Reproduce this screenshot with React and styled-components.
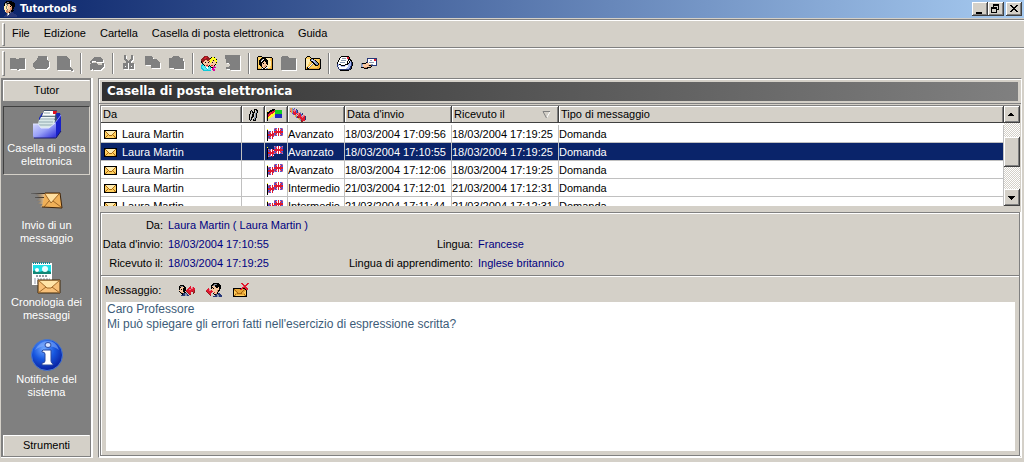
import React from 'react';
import styled, { createGlobalStyle, css } from 'styled-components';

const FACE = '#d4d0c8';
const SHADOW = '#808080';
const DARK = '#404040';
const NAVY = '#0a246a';

const GlobalStyle = createGlobalStyle`
  * { box-sizing: border-box; }
  body {
    margin: 0;
    background: ${FACE};
    font-family: "Liberation Sans", Arial, sans-serif;
    font-size: 11px;
    line-height: 13px;
    color: #000;
  }
  button { font: inherit; color: inherit; margin: 0; }
`;

const raised = css`
  border: 0;
  background: ${FACE};
  box-shadow: inset -1px -1px ${DARK}, inset 1px 1px #fff, inset -2px -2px ${SHADOW};
`;

/* ---------- window frame ---------- */

const Window = styled.div`
  display: flex;
  flex-direction: column;
  min-height: 100vh;
  padding-bottom: 4px;
`;

const TitleBar = styled.header`
  display: flex;
  align-items: center;
  height: 18px;
  margin-bottom: 1px;
  padding: 0 2px;
  gap: 2px;
  background: linear-gradient(to right, ${NAVY}, #a6caf0);
`;

const WindowTitle = styled.h1`
  flex: 1;
  margin: 0;
  font: bold 11px/14px "DejaVu Sans Condensed", Tahoma, sans-serif;
  color: #fff;
`;

const Controls = styled.div`
  display: flex;
`;

const ControlButton = styled.button`
  ${raised}
  display: flex;
  width: 16px;
  height: 14px;
  padding: 0;
  margin-left: ${(p) => (p.$apart ? '2px' : '0')};
`;

const Bar = styled.div`
  display: flex;
  align-items: center;
  height: ${(p) => p.$height};
  padding: 1px 2px 0;
  border-top: 1px solid ${SHADOW};
  box-shadow: inset 0 1px #fff;
`;

const Grip = styled.span`
  width: 3px;
  height: ${(p) => p.$height};
  border: 1px solid;
  border-color: #fff ${SHADOW} ${SHADOW} #fff;
`;

const Menu = styled.nav`
  display: flex;
  padding: 0 7px 2px;
  gap: 14px;
`;

const MenuButton = styled.button`
  padding: 0;
  border: 0;
  background: none;
`;

const ToolButton = styled.button`
  display: flex;
  align-items: center;
  justify-content: center;
  width: 24px;
  height: 24px;
  padding: 0;
  border: 0;
  background: none;
`;

const Separator = styled.span`
  width: 2px;
  height: 21px;
  margin: 0 3px;
  border-left: 1px solid ${SHADOW};
  border-right: 1px solid #fff;
`;

/* ---------- work area ---------- */

const Work = styled.div`
  flex: 1;
  display: flex;
  gap: 5px;
  padding: 1px 2px 0 1px;
`;

const Sidebar = styled.aside`
  display: flex;
  flex-direction: column;
  width: 92px;
  padding: 2px 1px 1px 2px;
  background: ${SHADOW};
  border-right: 2px solid #fff;
  border-bottom: 1px solid #fff;
`;

const GroupButton = styled.button`
  height: 21px;
  padding: 0;
  border: 1px solid;
  border-color: #fff ${FACE} ${FACE} #fff;
  background: ${FACE};
`;

const SideList = styled.div`
  flex: 1;
  display: flex;
  flex-direction: column;
  gap: 8px;
  padding: 5px 0;
`;

const SideButton = styled.button`
  display: flex;
  flex-direction: column;
  align-items: center;
  gap: 2px;
  height: 69px;
  padding: 1px 0;
  background: none;
  border: 1px solid transparent;
  color: #fff;
  ${(p) => p.$active && css`border-color: ${DARK} ${FACE} ${FACE} ${DARK};`}
`;

const SideLabel = styled.span`
  width: 82px;
`;

const Panel = styled.main`
  flex: 1;
  min-width: 0;
  display: flex;
  flex-direction: column;
  border: 1px solid;
  border-color: ${SHADOW} #fff #fff ${SHADOW};
  box-shadow: inset 1px 1px #fff;
`;

const HeadingBox = styled.div`
  padding: 3px 3px 2px;
  margin-bottom: 1px;
  border-bottom: 1px solid ${SHADOW};
`;

const Heading = styled.h2`
  margin: 0;
  height: 19px;
  padding-left: 5px;
  font: bold 12px/19px "DejaVu Sans", Verdana, sans-serif;
  color: #fff;
  background: linear-gradient(to right, #303030, #808080);
`;

const ListBox = styled.div`
  display: flex;
  height: 101px;
  margin: 0 1px 6px;
  border-top: 1px solid ${SHADOW};
  border-left: 1px solid ${SHADOW};
  background: #fff;
  overflow: hidden;
`;

const Mail = styled.table`
  flex: 1;
  align-self: flex-start;
  width: 100%;
  table-layout: fixed;
  border-collapse: separate;
  border-spacing: 0;
`;

const Col = styled.col`
  width: ${(p) => p.$width};
`;

const HeadCell = styled.th`
  height: 19px;
  padding: 0 2px;
  border-bottom: 2px solid #fff;
  background: ${FACE};
  box-shadow: inset -1px -1px ${DARK}, inset 1px 1px #fff, inset -2px -1px ${SHADOW};
  font-weight: normal;
  text-align: left;
  white-space: nowrap;
  svg { display: block; margin: 0 auto 0 ${(p) => (p.$center ? 'auto' : '0')}; }
`;

const SortLabel = styled.span`
  display: flex;
  align-items: center;
  justify-content: space-between;
  padding-right: 6px;
  svg { margin: 0; }
`;

const Row = styled.tr`
  background: ${(p) => (p.$selected ? NAVY : '#fff')};
  color: ${(p) => (p.$selected ? '#fff' : '#000')};
`;

const Cell = styled.td`
  height: 18px;
  padding: 1px 0 0;
  border-right: 1px solid #c0c0c0;
  border-bottom: 1px solid #c0c0c0;
  white-space: nowrap;
  overflow: hidden;
  svg { display: block; }
`;

const Sender = styled.span`
  display: flex;
  align-items: center;
  gap: 5px;
  padding-left: 3px;
`;

const ScrollBar = styled.div`
  display: flex;
  flex-direction: column;
  width: 16px;
  background: repeating-conic-gradient(${FACE} 0 25%, #fff 0 50%) 0 0 / 2px 2px;
`;

const ScrollButton = styled.button`
  ${raised}
  display: flex;
  width: 16px;
  height: 17px;
  padding: 0;
`;

const Track = styled.div`
  flex: 1;
  padding-top: 14px;
`;

const Thumb = styled.div`
  ${raised}
  height: 30px;
`;

/* ---------- message ---------- */

const Message = styled.section`
  flex: 1;
  display: flex;
  flex-direction: column;
  margin: 0 1px 1px;
  border: 1px solid ${SHADOW};
  box-shadow: inset 1px 1px #fff, 0 1px #fff, 1px 0 #fff;
`;

const Details = styled.dl`
  display: grid;
  grid-template-columns: 61px 176px 124px 1fr;
  column-gap: 5px;
  margin: 0;
  padding: 3px 0 2px 1px;
  line-height: 19px;
  border-bottom: 1px solid ${SHADOW};
  white-space: nowrap;
`;

const Term = styled.dt`
  text-align: right;
`;

const Value = styled.dd`
  margin: 0;
  color: #000080;
  grid-column: ${(p) => (p.$wide ? 'span 3' : 'auto')};
`;

const MessageBar = styled.div`
  display: flex;
  align-items: center;
  height: 26px;
  padding: 1px 4px 0;
  border-top: 1px solid #fff;
`;

const MessageLabel = styled.label`
  width: 68px;
`;

const MessageButton = styled(ToolButton)`
  width: 27px;
`;

const Body = styled.textarea`
  flex: 1;
  display: block;
  min-height: 149px;
  margin: 0 4px 4px 5px;
  padding: 0 1px;
  border: 0;
  outline: 0;
  resize: none;
  background: #fff;
  color: #3c5c78;
  font: 12px/15px "Liberation Sans", Arial, sans-serif;
`;

/* ---------- icons ---------- */

const PALETTE = {
  K: '#000000', W: '#ffffff', Y: '#ffd060', y: '#ffecb0', b: '#a86810', o: '#e8a838',
  R: '#e01830', r: '#902020', B: '#2028c0', n: '#283878', C: '#10c8d8', c: '#60e8f0',
  S: '#f8c8a0', s: '#d89068', G: '#10d020', g: '#808080', l: '#c8c8d0', L: '#8898b0',
  M: '#e000a0', F: '#ffff20', D: '#404040', p: '#e87888', i: '#a8b8f0', T: '#d4d0c8',
  u: '#5058d8', v: '#a060c0',
};

function Sprite({ rows }) {
  const w = Math.max(...rows.map((r) => r.length));
  const cells = [];
  rows.forEach((row, y) => {
    for (let x = 0; x < row.length; ) {
      let end = x + 1;
      while (end < row.length && row[end] === row[x]) end++;
      if (PALETTE[row[x]]) {
        cells.push(<rect key={`${x}-${y}`} x={x} y={y} width={end - x} height="1" fill={PALETTE[row[x]]} />);
      }
      x = end;
    }
  });
  return (
    <svg width={w} height={rows.length} viewBox={`0 0 ${w} ${rows.length}`} shapeRendering="crispEdges" aria-hidden="true">
      {cells}
    </svg>
  );
}

function Embossed({ d, stroke = 0 }) {
  const paint = (c) => (stroke ? { fill: 'none', stroke: c, strokeWidth: stroke } : { fill: c });
  return (
    <svg width="18" height="18" viewBox="0 0 18 18" shapeRendering="crispEdges" aria-hidden="true">
      <path d={d} transform="translate(1 1)" {...paint('#fff')} />
      <path d={d} {...paint(SHADOW)} />
    </svg>
  );
}

const ENVELOPE = [
  'KKKKKKKKKKKKK',
  'KbyyyyyyyyybK',
  'KYbyyyyyyybYK',
  'KYYbyyyyybYYK',
  'KYYYbyyybYYYK',
  'KYYbYbbbYbYYK',
  'KYbYYYYYYYbYK',
  'KbYYYYYYYYobK',
  'KKKKKKKKKKKKK',
];

const UK_FLAG = [
  '.......puuWRWuup',
  'F......uRpWRWpRu',
  'K......uuRWRWRuu',
  'KpuuWR.RRRRRRRRR',
  'KuRpWRWRRRRRRRRR',
  'KuuRWRRuuRWRWRuu',
  'KRRRRRRuRpWRWpRu',
  'KRRRRRRpuuWRWuup',
  'KuuRWRu.........',
  'KuRpWRW.........',
  'Kpuu.R..........',
  'K...............',
  'K...............',
];

const FLAGS = [
  '.....KKK........',
  '...KKKKRGGGGGGG.',
  'F.KKKRRRGGGGGGG.',
  'KKKRRRRYGGGGGGG.',
  'KKRRRRFFGGGGGGG.',
  'KRRRFFFFBBBBBBB.',
  'KRRFFFF.BBBBBBB.',
  'KRFFFF..BBBBBBB.',
  'KFFF....BBBBBBB.',
  'KF..............',
  'K...............',
  'K...............',
];

const BOOKS = [
  'soL.u...........',
  'poLup.n.........',
  'poLpppun........',
  'RoLRpRun........',
  '.oLRRRunp.L.....',
  '..uRRRRppRu.n...',
  '...uRR.RpRRun...',
  '.....oL.RRRu.pp.',
  '.....oLrRRRpppRn',
  '......urrRRRpRRn',
  '........oLRRRRRn',
  '.........oLRRRRn',
  '..........LrRRR.',
  '...........rr...',
];

const CLIP = [
  '.....KKK.',
  '..K..K.KK',
  '.KLK.K.LK',
  '.K.KKK.LK',
  '.K.LK.LK.',
  'KL.KK.LK.',
  'K..KK.LK.',
  'K.LKK.LK.',
  'K.KK.LLK.',
  'K.K..LK..',
  'KLK.KLK..',
  '.K..KKK..',
];

const PEOPLE = [
  '...rrrr.........',
  '..rrRRrr..KFFK..',
  '.rrRRrrrrKFFFFF.',
  'rrrrrrrrrFFFFFFK',
  'rrrrSSrrFFFYKYFF',
  'KrrSSSSSrFFSSSFF',
  'KrSSKSSKSFSKSSSK',
  '.KSSSSSSSSSSSSSF',
  '.CKSSSsSSSSSSSK.',
  'CCcKSRRSKSRRSK..',
  'CccccSSKcKSSsM..',
  'CcccCWWccCKKMMM.',
  'CCcccCWccCWMM...',
  '.CCcccCccc.MMM..',
  '..CCCCCCCC..MM..',
];

const FACE_FOLDER = [
  '.KKKK...........',
  'KYYYYKKKKKKKKKK.',
  'KYYYKKKKKyyyyYoK',
  'KYYKKgWKKKyyyYoK',
  'KYKKgWKKKKKyyYoK',
  'KYKKWKKSKKKyyyoK',
  'KYKKKKSSSKKyyyoK',
  'KYKKKSKSSKKyyyoK',
  'KYKKKSSSSSKyyyoK',
  'KYYKKSSSsSyyyyoK',
  'KYYYKSSsSKyyyYoK',
  'KYYYYKSSKWWyyYoK',
  'KooYgWKKWggYoooK',
  'KKKKKKKKKKKKKKKK',
];

const HAMMER_FOLDER = [
  '..KKK...........',
  '.KYYYK..........',
  'KYYYYYKKKKKKKKK.',
  'KyyyyKgiKYYYYYoK',
  'KyyyyKiWiLKYYYoK',
  'KyyyyYKKiiLKYYoK',
  'KyyyYYoKKiLLKYoK',
  'KyyyYYoWKKiLLKoK',
  'KyyYYoWgYKKLLKoK',
  'KyyYoWgYYYKKKooK',
  'KyYoWgYYYYYYYooK',
  'KYKWgYYYYYYYoooK',
  'KoKKooooooooooKK',
  'KKKKKKKKKKKKKKK.',
];

const TRAY = [
  '....KKKKKKKK....',
  '...KWWWWWWRRK...',
  '..KWWLLLLWRRK...',
  '..KWWWWWWWWKKK..',
  '.KWWLLLLLWWKWKK.',
  '.KWWWWWWWWKWKiK.',
  'KWWLLLLLWWKWKinK',
  'KWWWWWWWWWKKiinK',
  'niKKWWWWKKKiiinK',
  'niWiKKKKiWWiiinK',
  'nWWWiiiiWWWiinK.',
  '.nWWWWWWWWiiinK.',
  '.nWWWWWWWiiinnK.',
  '..nnnnnnnnnnnK..',
  '...KKKKKKKKK....',
];

const SEND = [
  '......nnnnnnnnnn',
  '......nWWWWWWRRn',
  '......nWWLLWWRRn',
  '......nWWWWWWWWn',
  '.....KnWLLLLLWWn',
  'LKKKKSSSWWWWWWWn',
  'LLSSSSSSSSLLWWWn',
  'LiSSSSSsKKnnnnnn',
  'LiSSSSSSSsK.....',
  'KKKsssKKKK......',
  '...KKKK.........',
];

const REPLY = [
  '.KKKK...........',
  'KggLKK.....R....',
  'KKSSSKK...RR.pR.',
  'KSSSKKK..RRRppRR',
  'KSKSKKK.RRppRRRR',
  'SSSSKKKRRRRRRRRr',
  'KSSSKK.rRRRRRrRr',
  '.KsSSKK.rRRR..rr',
  '..KKnnLn.rRR..r.',
  '...KnnLLn.rr....',
  '..nnnnLLnn......',
];

const FORWARD = [
  '.......KKKKKK...',
  '......KKgLgKKK..',
  '.....KKgLKKKKKK.',
  '.....KSSSKKKKKK.',
  '.....KKSSSKKSKK.',
  '..R..KSKSSSSSKK.',
  '.RRp.SSSSSSSSK..',
  'RRRppRSSSSSsKK..',
  'rRRRRRRSSSSsK...',
  '.rRRRR.SRSSK....',
  '..rRR..KSSsKnn..',
  '...rR...KKnLnnn.',
  '....r....nnLLnnn',
  '.......nnnnLLnnn',
];

const DELETE = [
  '........RR....RR',
  '.........RR..RR.',
  '..........RRRR..',
  '..........pRR...',
  '.........RRRRR..',
  'KKKKKKKKRRKKRRR.',
  'KboooooRRoobKRR.',
  'KobooooooobooK..',
  'KYobooooobooYK..',
  'KYYobooobooYYK..',
  'KYoobbbbboooYK..',
  'KYboooooooobYK..',
  'KboYYYYYYYYobK..',
  'KKKKKKKKKKKKKK..',
];

const PORTRAIT = [
  '....KKKKKK......',
  '...KKggKKKKK....',
  '..KLgKKKKKKKK...',
  '..KyggSSKKKKK...',
  '..KyygSSsKKKK...',
  '..yygySSKsKKK...',
  '..yygySSSsKK....',
  '..yygySSssKK....',
  '..SyygSSssK.....',
  '...yssSssKKK....',
  '...yssssgKK.....',
  '....sssKgnn.....',
  '.....LWgnnnn....',
  '....nLWnnnnnnn..',
  '...nnLnnnnnnnnn.',
  '..nnnnnnnnnnnnn.',
];

const InboxIcon = () => (
  <svg width="32" height="32" viewBox="0 0 32 32" aria-hidden="true">
    <defs>
      <linearGradient id="tray" x1="0" y1="0" x2="1" y2="1">
        <stop offset="0" stopColor="#d8dcff" />
        <stop offset=".5" stopColor="#98a0f8" />
        <stop offset="1" stopColor="#2828d8" />
      </linearGradient>
    </defs>
    <path d="M8 10 11 5h18l1 4-4 9H8z" fill="#1828b8" />
    <path d="M11 7 13 2h13l-1 5 2 8-20 4z" fill="#405068" />
    <path d="M13 3h12l-1 5H11z" fill="#fff" />
    <path d="M10 9h14l-1 4H8z" fill="#f0f8f8" />
    <path d="M8 12h16l-1 8H6z" fill="#d8e8e8" />
    <path d="M13 5h6M11 8h13M9 11h14M8 14h14M7 17h15" stroke="#90a8b0" fill="none" />
    <path d="M22 3h4l-1 3h-3z" fill="#e01020" />
    <path d="M24 15 30 7v16l-5 7z" fill="#1820c8" />
    <path d="M24 15 30 7" stroke="#8890ff" fill="none" />
    <path d="M2 16h5l3 4h8l6-5h1v13q0 2-2 2H4q-2 0-2-2z" fill="url(#tray)" />
    <path d="M2 16h5l3 4h8l6-5" stroke="#e0e4ff" fill="none" />
    <path d="M3 30h22l5-7" stroke="#181870" fill="none" />
  </svg>
);

const SendIcon = () => (
  <svg width="32" height="32" viewBox="0 0 32 32" aria-hidden="true">
    <defs>
      <linearGradient id="trail" x1="0" y1="0" x2="1" y2="0">
        <stop offset="0" stopColor="#605850" stopOpacity=".2" />
        <stop offset="1" stopColor="#ffd090" />
      </linearGradient>
      <linearGradient id="streak" x1="0" y1="0" x2="1" y2="0">
        <stop offset="0" stopColor="#303030" stopOpacity=".3" />
        <stop offset="1" stopColor="#302010" />
      </linearGradient>
    </defs>
    <path d="M4 9h10v10l-1 3H9l3-3H6l4-3H5l4-3z" fill="url(#trail)" />
    <path d="M0 8h15v1H0zM4 12h9v1H4z" fill="url(#streak)" />
    <path d="M14 8h15l2 15-20-1z" fill="#f0b058" />
    <path d="M14 9h14l-8 9z" fill="#ffdfa0" />
    <path d="m14 9 6 9 8-9M13 22l5-6m12 6-8-6" stroke="#a06828" fill="none" />
    <path d="M14 8h15l2 15-20-1" stroke="#402408" fill="none" />
  </svg>
);

const HistoryIcon = () => (
  <svg width="32" height="32" viewBox="0 0 32 32" aria-hidden="true">
    <path d="M1 1h20v22H1z" fill="#fff" />
    <path d="M2 3h18v8H2z" fill="#20e0e8" />
    <path d="M2 9 5 8l3 2 4-1 4-1 4 2v2H2z" fill="#108878" />
    <circle cx="6" cy="8" r="2" fill="#fff" />
    <circle cx="14" cy="7" r="3" fill="#e8ffff" />
    <path d="M2 1h18" stroke="#108898" strokeWidth="2" strokeDasharray="1 1" />
    <path d="M5 14h12" stroke="#303848" strokeDasharray="2 1" />
    <path d="M3 17h16M3 19h16M3 21h7" stroke="#9098a8" strokeDasharray="2 1" />
    <path d="M7 18h22v13H7z" fill="#f8c078" stroke="#402808" />
    <path d="M8 19h20l-8 7h-4z" fill="#ffe4a8" />
    <path d="m7 18 9 8h4l9-8M7 31l8-6m14 6-8-6" stroke="#a06828" fill="none" />
  </svg>
);

const InfoIcon = () => (
  <svg width="32" height="32" viewBox="0 0 32 32" aria-hidden="true">
    <defs>
      <radialGradient id="ball" cx=".4" cy=".3" r=".7">
        <stop offset="0" stopColor="#70a8ff" />
        <stop offset=".5" stopColor="#1858e0" />
        <stop offset="1" stopColor="#0820a0" />
      </radialGradient>
    </defs>
    <circle cx="16" cy="16" r="15.5" fill="url(#ball)" stroke="#4878d0" />
    <path d="M4 11Q9 2 17 2t11 9q-5-4-12-4T4 11z" fill="#90b8ff" opacity=".5" />
    <ellipse cx="17" cy="6" rx="3" ry="2.5" fill="#d8e4ff" stroke="#2848a0" />
    <path d="M12 11h8v11q0 2 2 3v1H11v-2q3 0 3-2v-7q0-2-3-2v-1z" fill="#fff" stroke="#2848a0" />
  </svg>
);

const Glyph = ({ d, w = 16, h = 14 }) => (
  <svg width={w} height={h} viewBox={`0 0 ${w} ${h}`} shapeRendering="crispEdges" aria-hidden="true">
    <path d={d} />
  </svg>
);

/* ---------- data ---------- */

const MENUS = ['File', 'Edizione', 'Cartella', 'Casella di posta elettronica', 'Guida'];

const TOOL_GROUPS = [
  [
    ['Apri', <Embossed key="i" d="M2 4h5l1 1h2l1-1h6v11h-5l-2 1-2-1H2z" />],
    ['Stampa', <Embossed key="i" d="M6 2h8l1 1v3l2 2v4l-3 3H3l-1-1-1-1V9l3-3h1z" />],
    ['Anteprima', <Embossed key="i" d="M1 2h9l4 4v7l3 3v1h-2l-1-1H1z" />],
  ],
  [['Aggiorna', <Embossed key="i" d="M3 6l2-2 2-1h5l2 2 1-1v4H8L7 7H4v2H2V7zM3 9h5l2 2h4V9h2v3l-2 3-2 1H6l-2-1v1H2v-5z" />]],
  [
    ['Taglia', <Embossed key="i" stroke={2} d="M5 1v4l7 6M12 1v4l-7 6M4 10h3v4H4zM10 10h3v4h-3z" />],
    ['Copia', <Embossed key="i" d="M1 2h6l2 2v1h3l4 4v5H7v-3H1z" />],
    ['Incolla', <Embossed key="i" d="M1 4h3l1-2h6l1 2h3v2l1 2v7H6v-1H1z" />],
  ],
  [
    ['Studenti', <Sprite key="i" rows={PEOPLE} />],
    ['Scheda', <Embossed key="i" d="M1 1h15v15H6v-1H2v-2h2l2-2-2-2H2V6L1 5z" />],
  ],
  [
    ['Cartella studente', <Sprite key="i" rows={FACE_FOLDER} />],
    ['Chiudi cartella', <Embossed key="i" d="M2 2h5l2 2h7v12H1V3z" />],
    ['Strumenti cartella', <Sprite key="i" rows={HAMMER_FOLDER} />],
  ],
  [
    ['Posta', <Sprite key="i" rows={TRAY} />],
    ['Invia', <Sprite key="i" rows={SEND} />],
  ],
];

const SIDE_ITEMS = [
  { label: 'Casella di posta elettronica', Icon: InboxIcon, active: true },
  { label: 'Invio di un messaggio', Icon: SendIcon },
  { label: 'Cronologia dei messaggi', Icon: HistoryIcon },
  { label: 'Notifiche del sistema', Icon: InfoIcon },
];

const MAILS = [
  ['Avanzato', '18/03/2004 17:09:56', '18/03/2004 17:19:25'],
  ['Avanzato', '18/03/2004 17:10:55', '18/03/2004 17:19:25'],
  ['Avanzato', '18/03/2004 17:12:06', '18/03/2004 17:19:25'],
  ['Intermedio', '21/03/2004 17:12:01', '21/03/2004 17:12:31'],
  ['Intermedio', '21/03/2004 17:11:44', '21/03/2004 17:12:31'],
];

const COLUMN_WIDTHS = ['141px', '23px', '23px', '57px', '107px', '107px', 'auto'];

export default function App() {
  return (
    <Window>
      <GlobalStyle />
      <TitleBar>
        <Sprite rows={PORTRAIT} />
        <WindowTitle>Tutortools</WindowTitle>
        <Controls>
          <ControlButton aria-label="Riduci a icona"><Glyph d="M4 10h6v2H4z" /></ControlButton>
          <ControlButton aria-label="Ripristina">
            <Glyph d="M5 2h6v6H9V7h1V4H6v1H5zM3 5h6v6H3zM4 7v3h4V7z" />
          </ControlButton>
          <ControlButton $apart aria-label="Chiudi">
            <Glyph d="M4 3h2v1h1v1h2V4h1V3h2v1h-1v1h-1v1H9v1h1v1h1v1h1v1h-2V9H9V8H7v1H6v1H4V9h1V8h1V7h1V6H6V5H5V4H4z" />
          </ControlButton>
        </Controls>
      </TitleBar>
      <Bar $height="28px">
        <Grip $height="23px" />
        <Menu>
          {MENUS.map((m) => <MenuButton key={m}>{m}</MenuButton>)}
        </Menu>
      </Bar>
      <Bar $height="30px">
        <Grip $height="25px" />
        {TOOL_GROUPS.map((group, i) => (
          <React.Fragment key={i}>
            {i > 0 && <Separator />}
            {group.map(([label, icon]) => <ToolButton key={label} aria-label={label}>{icon}</ToolButton>)}
          </React.Fragment>
        ))}
      </Bar>
      <Work>
        <Sidebar>
          <GroupButton>Tutor</GroupButton>
          <SideList>
            {SIDE_ITEMS.map(({ label, Icon, active }) => (
              <SideButton key={label} $active={active}>
                <Icon />
                <SideLabel>{label}</SideLabel>
              </SideButton>
            ))}
          </SideList>
          <GroupButton>Strumenti</GroupButton>
        </Sidebar>
        <Panel>
          <HeadingBox><Heading>Casella di posta elettronica</Heading></HeadingBox>
          <ListBox>
            <Mail>
              <colgroup>
                {COLUMN_WIDTHS.map((w, i) => <Col key={i} $width={w} />)}
              </colgroup>
              <thead>
                <tr>
                  <HeadCell>Da</HeadCell>
                  <HeadCell $center aria-label="Allegato"><Sprite rows={CLIP} /></HeadCell>
                  <HeadCell aria-label="Lingua"><Sprite rows={FLAGS} /></HeadCell>
                  <HeadCell aria-label="Livello"><Sprite rows={BOOKS} /></HeadCell>
                  <HeadCell>Data d'invio</HeadCell>
                  <HeadCell>
                    <SortLabel>
                      Ricevuto il
                      <svg width="9" height="8" viewBox="0 0 9 8" fill="none" aria-hidden="true">
                        <path d="M8 1 4.5 7" stroke="#fff" />
                        <path d="M8 .5H1L4.5 7" stroke="#808080" />
                      </svg>
                    </SortLabel>
                  </HeadCell>
                  <HeadCell>Tipo di messaggio</HeadCell>
                </tr>
              </thead>
              <tbody>
                {MAILS.map(([level, sent, received], i) => (
                  <Row key={sent} $selected={i === 1}>
                    <Cell><Sender><Sprite rows={ENVELOPE} />Laura Martin</Sender></Cell>
                    <Cell />
                    <Cell><Sprite rows={UK_FLAG.map((r) => `..${r}`)} /></Cell>
                    <Cell>{level}</Cell>
                    <Cell>{sent}</Cell>
                    <Cell>{received}</Cell>
                    <Cell>Domanda</Cell>
                  </Row>
                ))}
              </tbody>
            </Mail>
            <ScrollBar>
              <ScrollButton aria-label="Su"><Glyph h={17} d="M7 7h1v1h1v1h1v1H4V9h1V8h1V7z" /></ScrollButton>
              <Track><Thumb /></Track>
              <ScrollButton aria-label="Giù"><Glyph h={17} d="M4 7h7v1h-1v1H9v1H8v1H7v-1H6V9H5V8H4z" /></ScrollButton>
            </ScrollBar>
          </ListBox>
          <Message>
            <Details>
              <Term>Da:</Term>
              <Value $wide>Laura Martin ( Laura Martin )</Value>
              <Term>Data d'invio:</Term>
              <Value>18/03/2004 17:10:55</Value>
              <Term>Lingua:</Term>
              <Value>Francese</Value>
              <Term>Ricevuto il:</Term>
              <Value>18/03/2004 17:19:25</Value>
              <Term>Lingua di apprendimento:</Term>
              <Value>Inglese britannico</Value>
            </Details>
            <MessageBar>
              <MessageLabel htmlFor="body">Messaggio:</MessageLabel>
              <MessageButton aria-label="Rispondi"><Sprite rows={REPLY} /></MessageButton>
              <MessageButton aria-label="Inoltra"><Sprite rows={FORWARD} /></MessageButton>
              <MessageButton aria-label="Elimina"><Sprite rows={DELETE} /></MessageButton>
            </MessageBar>
            <Body
              id="body"
              readOnly
              spellCheck={false}
              value={"Caro Professore\nMi può spiegare gli errori fatti nell'esercizio di espressione scritta?"}
            />
          </Message>
        </Panel>
      </Work>
    </Window>
  );
}
